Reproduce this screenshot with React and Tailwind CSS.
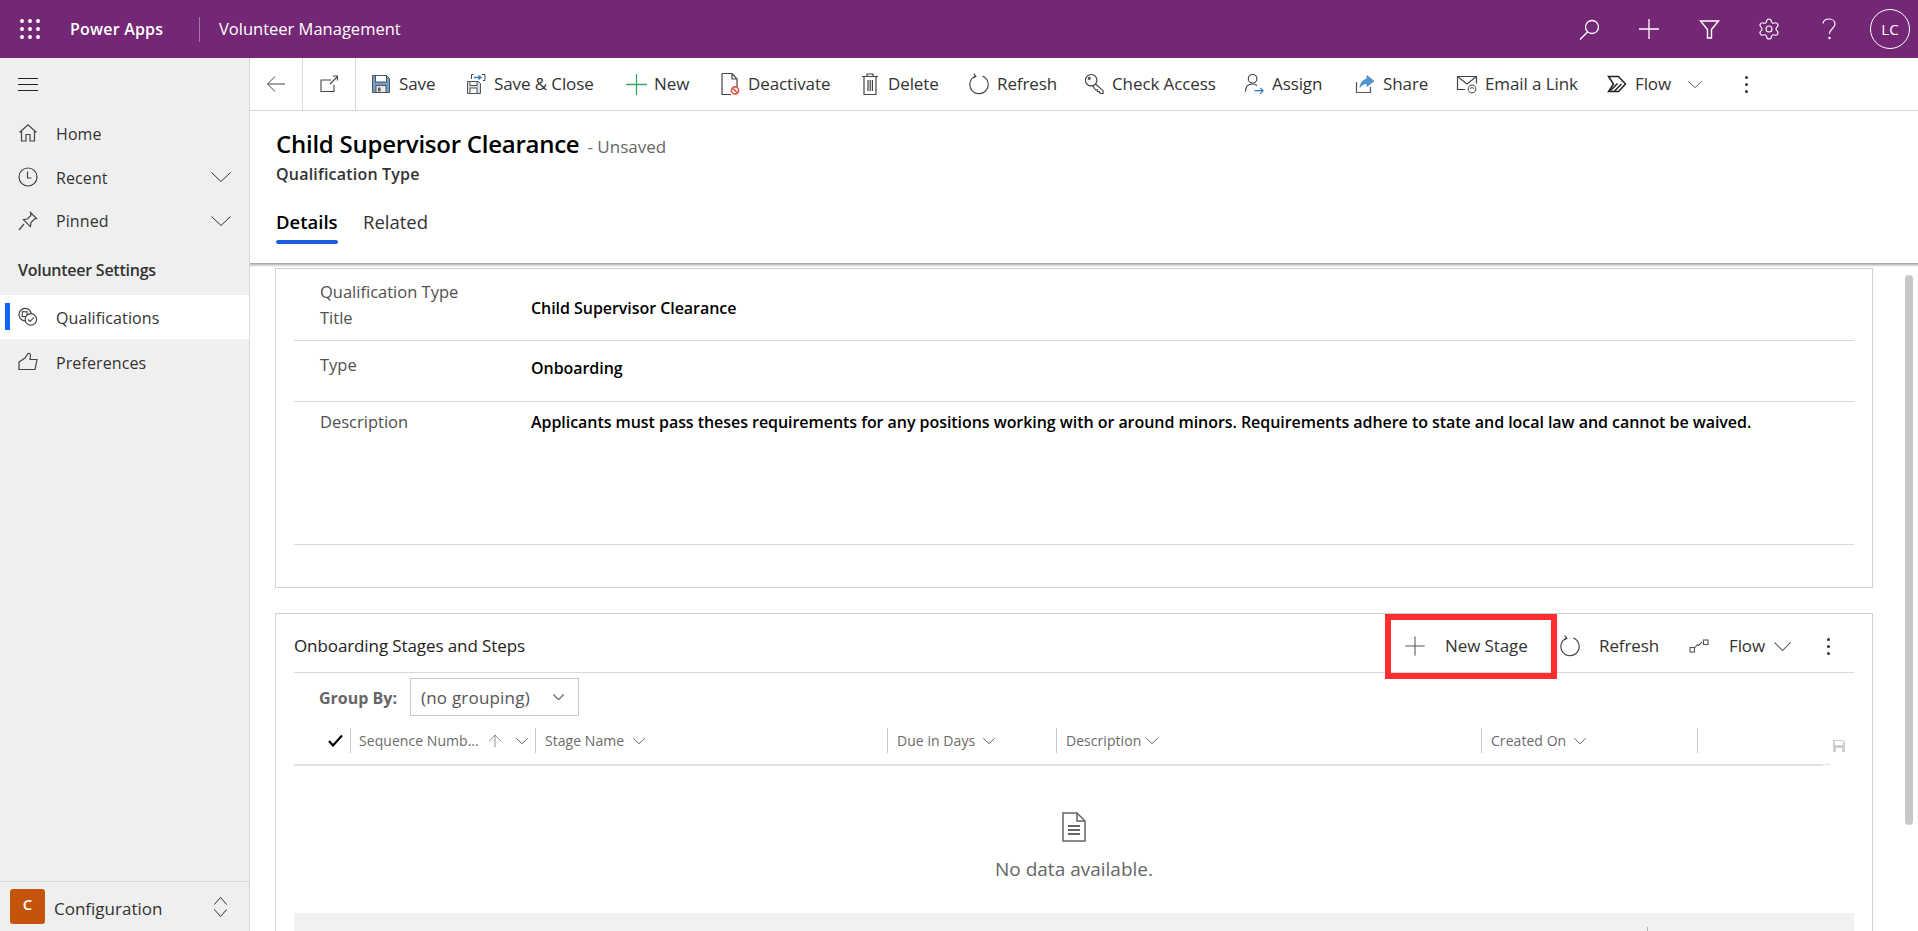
import { Settings, ChevronLeft, ChevronRight, ArrowUp, Plus } from "lucide-react";

function Svg({ className = "w-5 h-5", children, stroke = "#444", vb = "0 0 20 20", sw = 1.2 }) {
  return (
    <svg viewBox={vb} className={`shrink-0 ${className}`} fill="none" stroke={stroke} strokeWidth={sw}>
      {children}
    </svg>
  );
}

function Chev({ className, stroke = "#444", up, sw = 1 }) {
  return (
    <svg viewBox="0 0 20 10" preserveAspectRatio="none" className={`shrink-0 ${className}`} fill="none" stroke={stroke} strokeWidth={sw}>
      <path d={up ? "M0.5 9.5L10 0.5l9.5 9" : "M0.5 0.5L10 9.5l9.5-9"} vectorEffect="non-scaling-stroke" />
    </svg>
  );
}

const SaveIcon = () => (
  <svg viewBox="0 0 20 20" className="w-5 h-5 shrink-0">
    <path d="M1.5 1.5h14l3 3v14h-17z" fill="#6f9fd0" stroke="#555" />
    <rect x="4.5" y="1.5" width="11" height="6.5" fill="#fff" stroke="#555" />
    <rect x="5" y="11.5" width="10" height="7" fill="#e8e8e8" stroke="#555" />
    <rect x="7" y="13.5" width="2.5" height="4" fill="#555" />
  </svg>
);
const SaveCloseIcon = () => (
  <svg viewBox="0 0 20 22" className="w-5 h-[22px] shrink-0">
    <path d="M1.5 8.5h11l2 2v10h-13z" fill="#d5dde6" stroke="#555" />
    <rect x="4" y="8.5" width="7" height="4" fill="#fff" stroke="#555" />
    <rect x="4" y="15" width="7" height="5.5" fill="#fff" stroke="#555" />
    <path d="M5.5 6V1.5h2M16 1.5h3v6h-2" fill="none" stroke="#444" />
    <path d="M8 4.5h7M12.5 2.5l2.5 2-2.5 2" fill="none" stroke="#2b79c2" strokeWidth="1.3" />
  </svg>
);
const NewIcon = () => (
  <svg viewBox="0 0 21 21" className="w-[21px] h-[21px] shrink-0" fill="none" stroke="#34a86b" strokeWidth="1.3">
    <path d="M0 10.5h21M10.5 0v21" />
  </svg>
);
const DeactivateIcon = () => (
  <svg viewBox="0 0 20 24" className="w-5 h-6 shrink-0">
    <path d="M2 1.5h10l5 5.5v9M12 1.5V7h5M2 1.5v21h9" fill="none" stroke="#444" strokeWidth="1.2" />
    <circle cx="15" cy="18.5" r="3.6" fill="#fff" stroke="#e2574c" strokeWidth="1.6" />
    <path d="M12.6 16.2l4.8 4.6" stroke="#e2574c" strokeWidth="1.6" />
  </svg>
);
const TrashIcon = () => (
  <svg viewBox="0 0 20 24" className="w-5 h-6 shrink-0" fill="none" stroke="#444" strokeWidth="1.2">
    <path d="M2 4.5h16M7 4.5V2h6v2.5M4 4.5v18h12v-18M8 8v11M10.2 8v11M12.4 8v11" />
  </svg>
);
const RefreshIcon = () => (
  <svg viewBox="0 0 22 24" className="w-[21px] h-6 shrink-0" fill="none" stroke="#444" strokeWidth="1.2">
    <path d="M14 3.6A9.6 9.6 0 1 1 6.5 3.8" />
    <path d="M5 1.2l2.2 2.8-3 1.6" />
  </svg>
);
const KeyIcon = () => (
  <svg viewBox="0 0 22 24" className="w-[21px] h-6 shrink-0" fill="none" stroke="#444" strokeWidth="1.2">
    <circle cx="7.5" cy="8" r="6" />
    <circle cx="5.5" cy="6" r="1.1" />
    <path d="M12 12l8 7v3h-3l-1-2h-2v-2h-2l-3-4" />
  </svg>
);
const AssignIcon = () => (
  <svg viewBox="0 0 22 24" className="w-[21px] h-6 shrink-0" fill="none" stroke="#444" strokeWidth="1.2">
    <circle cx="9" cy="6.5" r="4.5" />
    <path d="M1.5 20c0-5 3-8 7.5-8 2 0 3.5.6 4.5 1.6" />
    <path d="M11 19h9M17 16l3 3-3 3" stroke="#2b79c2" />
  </svg>
);
const ShareIcon = () => (
  <svg viewBox="0 0 20 20" className="w-5 h-5 shrink-0">
    <path d="M1.5 8v10.5h14V13" fill="none" stroke="#555" strokeWidth="1.2" />
    <path d="M12 1.5l7 5.5-7 5.5V9.5c-3 0-5 1-7 4 .3-4.5 3-8 7-8.5z" fill="#4f93d1" stroke="#3c7bb5" strokeWidth="0.6" />
  </svg>
);
const EmailIcon = () => (
  <svg viewBox="0 0 22 20" className="w-[22px] h-5 shrink-0" fill="none" stroke="#444" strokeWidth="1.2">
    <path d="M9 15.5H1.5v-13h19v7" />
    <path d="M1.5 2.5l9.5 7.5 9.5-7.5" />
    <circle cx="16" cy="15" r="3.8" stroke="#666" />
    <path d="M14.5 15a1.5 1.5 0 0 1 3 0" stroke="#666" />
  </svg>
);
const FlowIcon = () => (
  <svg viewBox="0 0 20 18" className="w-5 h-[18px] shrink-0" fill="none" stroke="#222" strokeWidth="1.5">
    <path d="M1.5 1.5h10l7 7.5-7 7.5h-10l5-7.5z" />
    <path d="M3.5 15.5l7-7M7.5 16l7-7" />
  </svg>
);
const FlowSmall = () => (
  <svg viewBox="0 0 20 14" className="w-5 h-[14px] shrink-0" fill="none" stroke="#555" strokeWidth="1.1">
    <rect x="1" y="8.5" width="4.5" height="4.5" />
    <rect x="14.5" y="1" width="4.5" height="4.5" />
    <path d="M5.5 9l3-3.5 1 1L13 3" />
  </svg>
);
const DotsV = () => (
  <div className="flex flex-col gap-[4px]">
    <div className="w-[3px] h-[3px] rounded-full bg-[#333]"></div>
    <div className="w-[3px] h-[3px] rounded-full bg-[#333]"></div>
    <div className="w-[3px] h-[3px] rounded-full bg-[#333]"></div>
  </div>
);

const commands = [
  { icon: <SaveIcon />, label: "Save", item: "w-[95px]" },
  { icon: <SaveCloseIcon />, label: "Save & Close", item: "w-[160px]" },
  { icon: <NewIcon />, label: "New", item: "w-[94px]" },
  { icon: <DeactivateIcon />, label: "Deactivate", item: "w-[140px]" },
  { icon: <TrashIcon />, label: "Delete", item: "w-[109px]" },
  { icon: <RefreshIcon />, label: "Refresh", item: "w-[115px]" },
  { icon: <KeyIcon />, label: "Check Access", item: "w-[160px]" },
  { icon: <AssignIcon />, label: "Assign", item: "w-[111px]" },
  { icon: <ShareIcon />, label: "Share", item: "w-[102px]" },
  { icon: <EmailIcon />, label: "Email a Link", item: "w-[150px]" },
];

function TopBar() {
  return (
    <div className="h-[58px] shrink-0 bg-[#742774] flex items-center text-white">
      <div className="w-[70px] pl-[20px]">
        <div className="grid grid-cols-3 gap-[4px] w-[20px]">
          {[0, 1, 2, 3, 4, 5, 6, 7, 8].map((i) => (
            <div key={i} className="w-[4px] h-[4px] rounded-full bg-white"></div>
          ))}
        </div>
      </div>
      <span className="w-[129px] text-[16px] font-semibold tracking-[0.2px]">Power Apps</span>
      <div className="w-px h-[25px] bg-[#a775a7]"></div>
      <span className="ml-[19px] text-[16.5px]">Volunteer Management</span>
      <div className="ml-auto flex items-center">
        <div className="w-[60px] flex justify-center">
          <Svg className="w-[21px] h-[21px]" stroke="#fff" vb="0 0 21 21" sw={1.3}>
            <circle cx="13" cy="8" r="6.5" />
            <path d="M8.5 13L1 20.5" />
          </Svg>
        </div>
        <div className="w-[60px] flex justify-center">
          <Svg className="w-[22px] h-[22px]" stroke="#fff" vb="0 0 22 22" sw={1.3}>
            <path d="M1 11h20M11 1v20" />
          </Svg>
        </div>
        <div className="w-[60px] flex justify-center">
          <Svg className="w-[21px] h-[19px]" stroke="#fff" vb="0 0 21 19" sw={1.4}>
            <path d="M1.5 1h18L12.5 9.5V18h-4V9.5z" />
          </Svg>
        </div>
        <div className="w-[60px] flex justify-center">
          <Settings size={24} strokeWidth={1.1} color="#fff" />
        </div>
        <div className="w-[60px] flex justify-center">
          <Svg className="w-[14px] h-[22px]" stroke="#fff" vb="0 0 14 22" sw={1.2}>
            <path d="M1 5.5C1.4 2.8 3.8 1 7 1c3.4 0 6 2 6 5 0 4.5-5.5 4.5-5.5 10" />
            <circle cx="7.5" cy="20" r="0.6" />
          </Svg>
        </div>
        <div className="ml-[11px] mr-[8px] w-[40px] h-[40px] rounded-full border border-white flex items-center justify-center text-[15px]">
          LC
        </div>
      </div>
    </div>
  );
}

function NavRow({ icon, label, chevron, rowClass = "h-[44px]", active, textClass = "pt-[1px]" }) {
  return (
    <div className={`relative flex items-center pl-[18px] pr-[18px] ${rowClass} ${active ? "bg-white" : ""}`}>
      {active && <div className="absolute left-[5px] top-[8px] w-[5px] h-[27px] bg-[#0f62fe]"></div>}
      <div className="w-[38px] shrink-0">{icon}</div>
      <span className={`text-[16px] tracking-[0.1px] text-[#333] ${textClass}`}>{label}</span>
      {chevron && <Chev className="ml-auto w-[20px] h-[10px]" stroke="#333" />}
    </div>
  );
}

function Sidebar() {
  return (
    <div className="w-[250px] shrink-0 bg-[#efefef] border-r border-[#d8d8d8] flex flex-col">
      <div className="h-[53px] flex items-center pl-[18px]">
        <div className="w-[20px] flex flex-col gap-[5px]">
          <div className="h-px bg-[#222]"></div>
          <div className="h-px bg-[#222]"></div>
          <div className="h-px bg-[#222]"></div>
        </div>
      </div>
      <NavRow
        label="Home"
        icon={
          <Svg stroke="#444">
            <path d="M1.5 9.5L10 1.8l8.5 7.7M3.5 8v10h4.5v-6.5h4V18h4.5V8" />
          </Svg>
        }
      />
      <NavRow
        label="Recent"
        chevron
        icon={
          <Svg stroke="#444">
            <circle cx="10" cy="10" r="9" />
            <path d="M9.5 4.5V11h4" />
          </Svg>
        }
      />
      <NavRow
        label="Pinned"
        chevron
        rowClass="h-[43px]"
        icon={
          <Svg stroke="#444">
            <path d="M12.5 1.5l6 6-2 .6-3.5 3.5-.6 4-7-7 4-.6 3.5-3.5zM6 13l-5 6" />
          </Svg>
        }
      />
      <div className="h-[53px] flex items-center pl-[18px] pt-[2px] text-[16px] font-semibold tracking-[-0.25px] text-[#333]">
        Volunteer Settings
      </div>
      <NavRow
        label="Qualifications"
        active
        textClass="pt-[2px]"
        icon={
          <Svg stroke="#444" vb="0 0 21 20">
            <circle cx="7.5" cy="7.5" r="6.5" />
            <rect x="4.5" y="4.5" width="5" height="5" />
            <circle cx="13.5" cy="12.5" r="6" fill="#fff" />
            <path d="M10.5 12.5l2.2 2.2 3.8-4" />
          </Svg>
        }
      />
      <NavRow
        label="Preferences"
        rowClass="h-[44px] mt-[1px]"
        icon={
          <Svg stroke="#444">
            <path d="M1 10l6-4 3-4.5c1.7-.5 2.8.5 2.5 2.5L12 7.5h7L17 17.5H1z" />
          </Svg>
        }
      />
      <div className="mt-auto h-[50px] border-t border-[#d8d8d8] flex items-center pl-[10px] pr-[22px]">
        <div className="w-[35px] h-[35px] rounded-[3px] bg-[#c35409] text-white text-[15px] font-semibold flex items-center justify-center pb-[4px]">
          C
        </div>
        <span className="ml-[9px] pt-[4px] text-[17px] text-[#333]">Configuration</span>
        <div className="ml-auto flex flex-col items-center gap-[4px]">
          <Chev up className="w-[13px] h-[8px]" stroke="#333" />
          <Chev className="w-[13px] h-[8px]" stroke="#333" />
        </div>
      </div>
    </div>
  );
}

function CommandBar() {
  return (
    <div className="h-[53px] shrink-0 border-b border-[#d8d8d8] flex items-center text-[17px] tracking-[-0.1px] text-[#333]">
      <div className="w-[53px] h-full border-r border-[#d8d8d8] flex items-center justify-center">
        <Svg className="w-[20px] h-[20px]" stroke="#444" sw={1}>
          <path d="M19 10H1.5M9 2.5L1.5 10 9 17.5" />
        </Svg>
      </div>
      <div className="w-[53px] h-full border-r border-[#d8d8d8] flex items-center justify-center">
        <Svg className="w-[20px] h-[20px]" stroke="#444" sw={1.1}>
          <path d="M12 6H2v11.5h13V11M11 10l7.5-7.5M14 2h4.5v4.5" />
        </Svg>
      </div>
      <div className="flex items-center pl-[15px] h-full">
        {commands.map((c) => (
          <div key={c.label} className={`flex items-center h-full ${c.item}`}>
            <div className="w-[20px] h-[24px] flex items-center justify-center">{c.icon}</div>
            <span className="ml-[8px] whitespace-nowrap">{c.label}</span>
          </div>
        ))}
        <div className="flex items-center h-full">
          <FlowIcon />
          <span className="ml-[8px] w-[36px]">Flow</span>
          <Chev className="ml-[17px] w-[14px] h-[7px]" stroke="#666" />
          <div className="ml-[43px]">
            <DotsV />
          </div>
        </div>
      </div>
    </div>
  );
}

function PageHeader() {
  return (
    <div className="shrink-0">
      <div className="h-[152px] bg-white pl-[26px]">
        <div className="pt-[17px] flex items-baseline">
          <h1 className="text-[24px] leading-[32px] font-semibold tracking-[-0.25px] text-black">Child Supervisor Clearance</h1>
          <span className="ml-[8px] text-[17px] text-[#666]">- Unsaved</span>
        </div>
        <div className="mt-[2px] text-[16px] leading-[24px] font-semibold tracking-[0.2px] text-[#333]">Qualification Type</div>
        <div className="mt-[23px] flex text-[18.5px] leading-[26px]">
          <div className="relative w-[62px] font-semibold text-black">
            Details
            <div className="absolute left-0 right-0 top-[31px] h-[4px] rounded-[2px] bg-[#1a5fd9]"></div>
          </div>
          <div className="ml-[25px] text-[#333]">Related</div>
        </div>
      </div>
      <div className="h-[4px] bg-gradient-to-b from-[#a0a0a0] to-white"></div>
    </div>
  );
}

function DetailRow({ label, children, rowClass, labelClass, valueClass }) {
  return (
    <div className={`flex pl-[26px] border-b border-[#d8d8d8] ${rowClass}`}>
      <div className={`w-[211px] shrink-0 text-[16.5px] leading-[26px] text-[#505050] ${labelClass}`}>{label}</div>
      <div className={`text-[16px] leading-[26px] font-semibold tracking-[-0.05px] text-black whitespace-nowrap ${valueClass}`}>{children}</div>
    </div>
  );
}

function DetailsCard() {
  return (
    <div className="h-[320px] border border-[#d0d0d0] px-[18px] mt-[1px]">
      <DetailRow
        rowClass="h-[72px]"
        labelClass="pt-[10px]"
        valueClass="pt-[26px]"
        label={
          <>
            Qualification Type
            <br />
            Title
          </>
        }
      >
        Child Supervisor Clearance
      </DetailRow>
      <DetailRow rowClass="h-[61px]" labelClass="pt-[11px]" valueClass="pt-[14px]" label="Type">
        Onboarding
      </DetailRow>
      <DetailRow rowClass="h-[143px]" labelClass="pt-[7px]" valueClass="pt-[7px]" label="Description">
        Applicants must pass theses requirements for any positions working with or around minors. Requirements adhere to state and local law and cannot be waived.
      </DetailRow>
    </div>
  );
}

const columns = [
  { label: "Stage Name", w: "w-[352px]", text: "w-[80px]", chev: "ml-[8px]" },
  { label: "Due in Days", w: "w-[169px]", text: "w-[78px]", chev: "ml-[8px]" },
  { label: "Description", w: "w-[425px]", text: "w-[76px]", chev: "ml-[4px]" },
  { label: "Created On", w: "w-[216px]", text: "w-[76px]", chev: "ml-[7px]" },
];

function StagesCard() {
  return (
    <div className="relative mt-[25px] border-x border-t border-[#d0d0d0] px-[18px] h-[320px]">
      {/* annotation drawn over the grid toolbar */}
      <div className="absolute left-[1109px] top-0 w-[172px] h-[65px] border-[6px] border-[#ff2e2e]"></div>
      <div className="h-[59px] border-b border-[#d8d8d8] flex items-center pt-[6px] text-[17px] tracking-[-0.1px] text-[#333]">
        <span className="w-[1109px] font-medium text-[#222]">Onboarding Stages and Steps</span>
        <Plus size={32} strokeWidth={0.8} color="#555" className="-mx-[4px]" />
        <span className="ml-[18px] w-[81px] whitespace-nowrap">New Stage</span>
        <div className="ml-[34px]">
          <RefreshIcon />
        </div>
        <span className="ml-[18px] w-[56px]">Refresh</span>
        <div className="ml-[34px]">
          <FlowSmall />
        </div>
        <span className="ml-[20px] w-[35px]">Flow</span>
        <Chev className="ml-[10px] w-[17px] h-[9px]" stroke="#555" />
        <div className="ml-[36px]">
          <DotsV />
        </div>
      </div>
      <div className="flex items-center pt-[5px] pl-[25px]">
        <span className="w-[91px] pt-[1px] text-[16px] font-bold text-[#666] whitespace-nowrap">Group By:</span>
        <div className="w-[169px] h-[38px] border border-[#c8c8c8] flex items-center pl-[10px] text-[17px] tracking-[0.2px] text-[#555]">
          <span className="whitespace-nowrap pt-[1px]">(no grouping)</span>
          <Chev className="ml-auto mr-[14px] w-[11px] h-[6px]" stroke="#777" sw={1.5} />
        </div>
      </div>
      <div className="mt-[12px] flex text-[14px] tracking-[0.05px] text-[#6b6b6b] h-[25px]">
        <div className="w-[56px] flex items-center justify-end pr-[7px]">
          <Svg className="w-[15px] h-[13px]" stroke="#000" vb="0 0 15 13" sw={2.2}>
            <path d="M1 7l4 4.5L14 1.5" />
          </Svg>
        </div>
        <div className="w-[185px] border-l border-[#c8c8c8] pl-[8px] flex items-center">
          <span className="w-[123px] whitespace-nowrap">Sequence Numb...</span>
          <ArrowUp className="ml-[3px]" size={20} strokeWidth={0.9} color="#666" />
          <Chev className="ml-[11px] w-[12px] h-[6px]" stroke="#666" />
        </div>
        {columns.map((c) => (
          <div key={c.label} className={`${c.w} border-l border-[#c8c8c8] pl-[9px] flex items-center`}>
            <span className={`${c.text} whitespace-nowrap`}>{c.label}</span>
            <Chev className={`${c.chev} w-[12px] h-[6px]`} stroke="#666" />
          </div>
        ))}
        <div className="flex-1 border-l border-[#c8c8c8] flex justify-end pr-[8px]">
          <svg viewBox="0 0 14 14" className="w-[14px] h-[14px] mt-[11px]">
            <path d="M1 1h10l2 2v10H1z" fill="#cfcfcf" />
            <rect x="3" y="2" width="8" height="4" fill="#fff" />
            <rect x="4" y="9" width="6" height="4" fill="#fff" />
          </svg>
        </div>
      </div>
      <div className="mt-[11px] flex items-start">
        <div className="w-[1528px] h-[2px] bg-[#e0e0e0]"></div>
        <div className="w-[8px] h-px bg-[#e0e0e0]"></div>
      </div>
      <div className="flex flex-col items-center">
        <svg viewBox="0 0 24 30" className="mt-[46px] w-[24px] h-[30px]" fill="none" stroke="#666" strokeWidth="1.5">
          <path d="M1 1h14l8 8v20H1zM15 1v8h8" />
          <path d="M6 14h12M6 18h12M6 22h12" strokeWidth="1.8" />
        </svg>
        <div className="mt-[14px] text-[19px] leading-[26px] text-[#666]">No data available.</div>
      </div>
      <div className="mt-[31px] w-[1560px] h-[40px] bg-[#f1f1f1] flex text-[#b5b5b5] pt-[14px] pl-[1353px]">
        <div className="h-[16px] w-px bg-[#b5b5b5]"></div>
        <ChevronLeft className="-ml-[3px]" size={18} strokeWidth={1} />
        <ChevronLeft className="ml-[31px]" size={18} strokeWidth={1} />
        <ChevronRight className="ml-[105px]" size={18} strokeWidth={1} />
      </div>
    </div>
  );
}

export default function App() {
  return (
    <div className="h-[931px] w-full overflow-hidden flex flex-col bg-white [font-family:'Open_Sans','Noto_Sans',sans-serif]">
      <TopBar />
      <div className="flex flex-1 min-h-0">
        <Sidebar />
        <div className="flex-1 min-w-0 flex flex-col">
          <CommandBar />
          <PageHeader />
          <div className="flex flex-1 min-h-0">
            <div className="flex-1 min-w-0 pl-[25px] overflow-hidden">
              <DetailsCard />
              <StagesCard />
            </div>
            <div className="w-[45px] shrink-0 pl-[32px] pt-[8px]">
              <div className="w-[8px] h-[550px] rounded-[4px] bg-[#c8c8c8]"></div>
            </div>
          </div>
        </div>
      </div>
    </div>
  );
}
